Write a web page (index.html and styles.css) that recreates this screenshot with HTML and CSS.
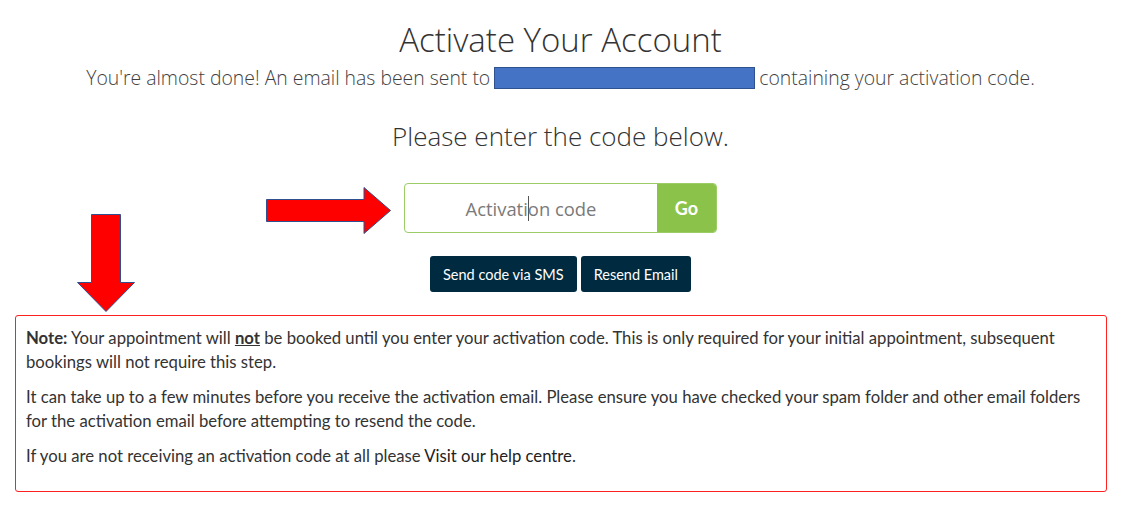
FILE: index.html
```html
<!DOCTYPE html>
<html>
<head>
<meta charset="utf-8">
<link rel="stylesheet" href="styles.css">
</head>
<body>
<div class="page">
  <h1 class="title">Activate Your Account</h1>
  <p class="sub">You're almost done! An email has been sent to <span class="redact"></span> containing your activation code.</p>
  <h2 class="enter">Please enter the code below.</h2>
  <div class="form-row">
    <div class="code-group">
      <div class="code-input"><span class="ph">Activati</span><span class="caret"></span><span class="ph">on code</span></div>
      <button class="go">Go</button>
    </div>
  </div>
  <div class="btn-row">
    <button class="dark">Send code via SMS</button>
    <button class="dark">Resend Email</button>
  </div>
  <div class="note">
    <p><strong>Note:</strong> Your appointment will <strong class="u">not</strong> be booked until you enter your activation code. This is only required for your initial appointment, subsequent bookings will not require this step.</p>
    <p>It can take up to a few minutes before you receive the activation email. Please ensure you have checked your spam folder and other email folders for the activation email before attempting to resend the code.</p>
    <p>If you are not receiving an activation code at all please <a class="link">Visit our help centre</a>.</p>
  </div>
  <svg class="arrow-right" width="126" height="48" viewBox="0 0 126 48"><polygon points="0.5,12.5 98,12.5 98,0.5 124.5,23.5 98,46.5 98,34.5 0.5,34.5" fill="#ff0000" stroke="#2f4f8f" stroke-width="1"/></svg>
  <svg class="arrow-down" width="59" height="99" viewBox="0 0 59 99"><polygon points="14.5,0.5 43.5,0.5 43.5,68.5 57.5,68.5 29,97.5 0.5,68.5 14.5,68.5" fill="#ff0000" stroke="#2f4f8f" stroke-width="1"/></svg>
</div>
</body>
</html>
```
FILE: styles.css
```css
html, body { margin: 0; padding: 0; background: #fff; }
.page {
  position: relative;
  width: 1127px;
  height: 509px;
  box-sizing: border-box;
  padding-right: 6px;
  display: flex;
  flex-direction: column;
  align-items: center;
  font-family: "Open Sans", sans-serif;
  color: #333;
}
.title {
  margin: 18px 0 0;
  font-weight: 300;
  font-size: 33px;
  line-height: 44px;
  color: #333;
}
.sub {
  margin: 3px 0 0;
  font-weight: 300;
  font-size: 19.4px;
  line-height: 26px;
  color: #3f3f3f;
  display: flex;
  align-items: center;
  gap: 4px;
}
.redact {
  display: inline-block;
  width: 259px;
  height: 20px;
  background: #4472c4;
  border: 1px solid #2f528f;
}
.enter {
  margin: 27px 0 0;
  font-weight: 300;
  font-size: 26px;
  line-height: 36px;
  color: #333;
}
.form-row { margin-top: 29px; }
.code-group {
  display: flex;
  width: 313px;
  height: 50px;
  border: 1px solid #9ccc65;
  border-radius: 4px;
  box-sizing: border-box;
  overflow: hidden;
}
.code-input {
  flex: 1;
  display: flex;
  align-items: center;
  justify-content: center;
  font-family: "Open Sans", sans-serif;
  font-size: 18.4px;
  color: #7a7a7a;
}
.caret {
  display: inline-block;
  width: 1px;
  height: 25px;
  background: #555;
  margin: 0 -1px 0 0;
}
.go {
  width: 59px;
  border: 0;
  background: #8bc34a;
  color: #fff;
  font-family: "Lato", sans-serif;
  font-weight: 700;
  font-size: 18px;
  padding: 0;
}
.btn-row {
  margin-top: 23px;
  display: flex;
  gap: 4px;
}
.dark {
  height: 36px;
  padding: 0 13px;
  background: #002a3f;
  color: #fff;
  border: 0;
  border-radius: 3px;
  font-family: "Lato", sans-serif;
  font-size: 14.5px;
}
.note {
  align-self: stretch;
  margin: 23px 14px 0 15px;
  border: 1px solid #ff2020;
  border-radius: 3px;
  padding: 10px 10px 10px 10px;
  font-family: "Lato", sans-serif;
  font-size: 16.7px;
  line-height: 24px;
  color: #333;
}
.note p { margin: 0 0 11px; }
.note p:last-child { margin-bottom: 13px; }
.u { text-decoration: underline; }
.link { color: #222; }
.arrow-right { position: absolute; left: 266px; top: 187px; }
.arrow-down { position: absolute; left: 77px; top: 214px; }
```
